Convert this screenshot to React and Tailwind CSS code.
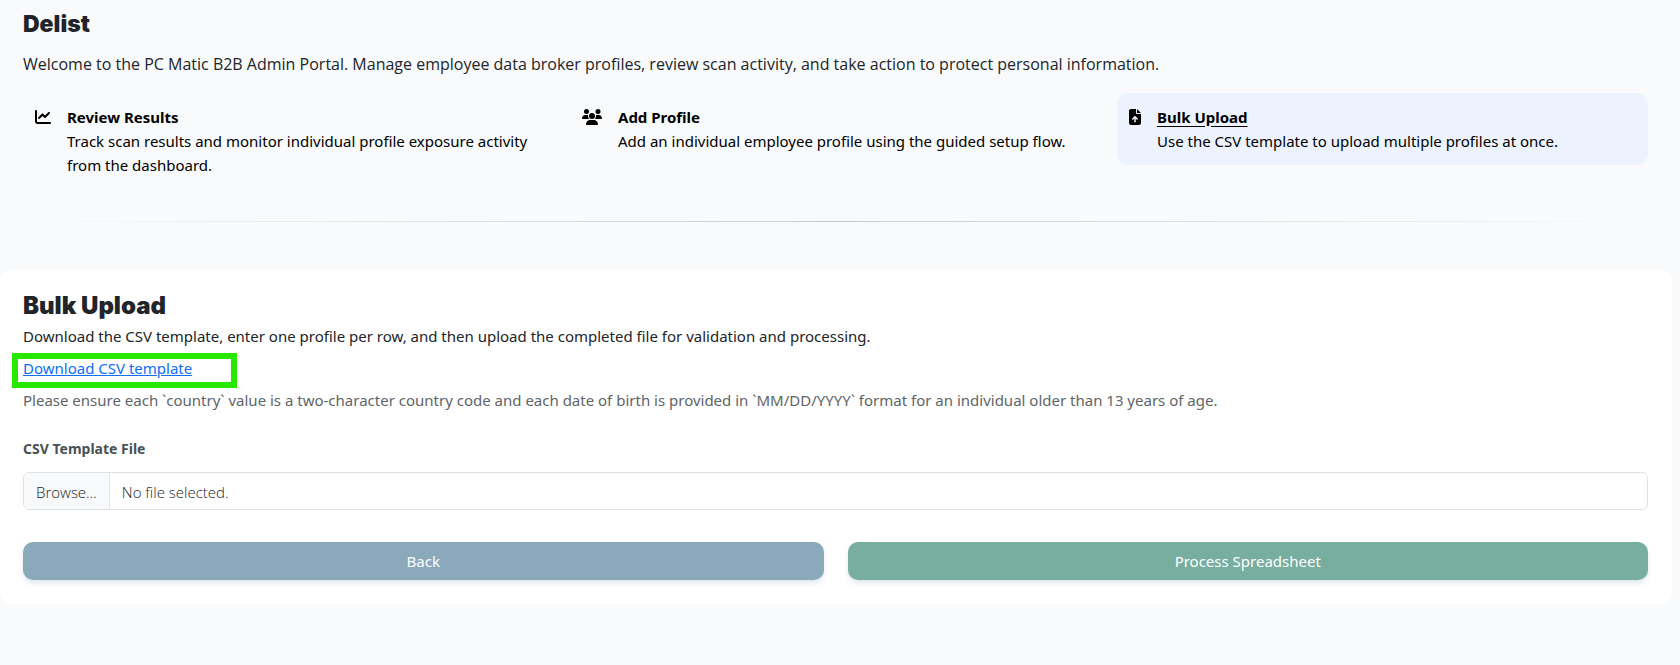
// src/pages/DelistBulkUpload.jsx
import React, { useState } from "react";
import { FaChartLine, FaUsers, FaFileArrowUp } from "react-icons/fa6";

const actions = [
    {
        id: "results",
        title: "Review Results",
        text: "Track scan results and monitor individual profile exposure activity from the dashboard.",
        Icon: FaChartLine,
        iconWidth: "w-4"
    },
    {
        id: "add",
        title: "Add Profile",
        text: "Add an individual employee profile using the guided setup flow.",
        Icon: FaUsers,
        iconWidth: "w-5"
    },
    {
        id: "bulk",
        title: "Bulk Upload",
        text: "Use the CSV template to upload multiple profiles at once.",
        Icon: FaFileArrowUp,
        iconWidth: "w-3"
    }
];

function ActionCard({ action, active, onSelect }) {
    const { title, text, Icon, iconWidth } = action;
    return (
        <button
            type="button"
            onClick={onSelect}
            className={`flex items-start gap-4 rounded-xl px-3 py-3 text-left leading-6 text-black ${active ? "bg-[#ecf3ff]" : ""}`}
        >
            <Icon className={`mt-1 h-4 shrink-0 ${iconWidth}`} />
            <span>
                <span className={`block font-bold ${active ? "underline underline-offset-3" : ""}`}>{title}</span>
                <span className="block">{text}</span>
            </span>
        </button>
    );
}

export default function App() {
    const [selected, setSelected] = useState("bulk");
    const [file, setFile] = useState(null);

    return (
        <div className="min-h-screen bg-[#f9fafc] pr-2 font-['Noto_Sans',sans-serif] text-[15px] leading-6 text-[#212529]">
            <header className="pt-2 pr-6 pl-[23px]">
                <h1 className="font-['Inter',sans-serif] text-[23px] leading-8 font-black">Delist</h1>
                <p className="mt-3 font-['Open_Sans',sans-serif] text-base leading-6">
                    Welcome to the PC Matic B2B Admin Portal. Manage employee data broker profiles, review scan activity, and take action to protect personal information.
                </p>
                <nav className="mt-[17px] grid grid-cols-3 items-start gap-4">
                    {actions.map(action => (
                        <ActionCard
                            key={action.id}
                            action={action}
                            active={action.id === selected}
                            onSelect={() => setSelected(action.id)}
                        />
                    ))}
                </nav>
            </header>

            <hr className="mt-8 mr-6 mb-12 ml-[23px] h-px border-0 bg-linear-to-r from-transparent via-[#c8cacc] to-transparent" />

            <main className="rounded-xl bg-white py-6 pr-6 pl-[23px]">
                <h2 className="font-['Inter',sans-serif] text-2xl leading-6 font-black">Bulk Upload</h2>
                <p className="mt-[6px]">
                    Download the CSV template, enter one profile per row, and then upload the completed file for validation and processing.
                </p>
                <div className="relative mt-2">
                    <a href="#template" className="text-[#0d6efd] underline">Download CSV template</a>
                    {/* callout frame around the link */}
                    <div className="pointer-events-none absolute -top-[3px] -left-[11px] h-[35px] w-[225px] border-6 border-[#28e800]" />
                </div>
                <p className="mt-2 text-[#616569]">
                    Please ensure each `country` value is a two-character country code and each date of birth is provided in `MM/DD/YYYY` format for an individual older than 13 years of age.
                </p>

                <label htmlFor="csv-file" className="mt-[25px] block text-sm leading-6 font-bold text-[#495057]">
                    CSV Template File
                </label>
                <div className="relative mt-[11px]">
                    <input
                        id="csv-file"
                        type="file"
                        accept=".csv"
                        className="peer sr-only"
                        onChange={e => setFile(e.target.files[0] ?? null)}
                    />
                    <label
                        htmlFor="csv-file"
                        className="flex h-[38px] cursor-pointer overflow-hidden rounded-md border border-[#dee2e6] font-['Open_Sans',sans-serif] text-[15px] leading-[38px] font-light peer-focus-visible:border-blue-400"
                    >
                        <span className="border-r border-[#dee2e6] bg-[#f8f9fa] px-3">Browse…</span>
                        <span className="px-3">{file ? file.name : "No file selected."}</span>
                    </label>
                </div>

                <div className="mt-8 grid grid-cols-2 gap-6">
                    <button type="button" className="h-[38px] rounded-[10px] bg-[#8aa9bb] text-white shadow-md shadow-slate-200">
                        Back
                    </button>
                    <button type="button" className="h-[38px] rounded-[10px] bg-[#77ae9f] text-white shadow-md shadow-slate-200">
                        Process Spreadsheet
                    </button>
                </div>
            </main>
        </div>
    );
}
